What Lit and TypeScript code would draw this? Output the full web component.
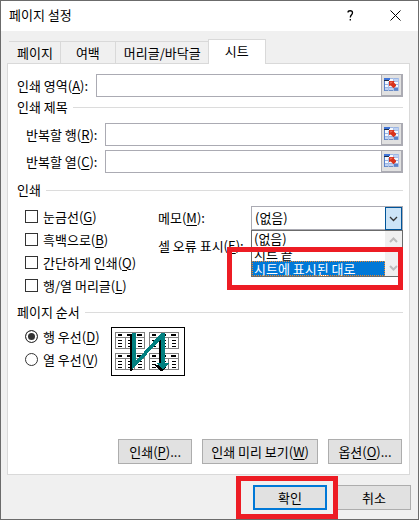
import { LitElement, html, css, svg } from "lit";
import { customElement, property, state } from "lit/decorators.js";
import { classMap } from "lit/directives/class-map.js";

const shared = css`
  :host {
    display: block;
    box-sizing: border-box;
  }
  *,
  *::before {
    box-sizing: border-box;
  }
  button,
  input,
  select {
    font: inherit;
    color: inherit;
    margin: 0;
    border-radius: 0;
  }
  u {
    text-decoration-thickness: 1px;
    text-underline-offset: 2px;
  }
`;

/** Caption followed by a thin rule. */
@customElement("section-heading")
export class SectionHeading extends LitElement {
  static styles = [
    shared,
    css`
      .heading {
        display: flex;
        align-items: center;
        gap: 5px;
        height: 20px;
        margin: 0;
        font-size: 13px;
        font-weight: 400;
      }
      .rule {
        flex: 1;
        height: 1px;
        background: #dcdcdc;
      }
    `,
  ];
  render() {
    return html`<h2 class="heading"><slot></slot><span class="rule"></span></h2>`;
  }
}

/** Labelled text box with a range picker button at its end. */
@customElement("range-field")
export class RangeField extends LitElement {
  @property() label = "";
  @property() key = "";

  static styles = [
    shared,
    css`
      .row {
        display: flex;
        align-items: center;
        height: 23px;
      }
      .label {
        flex: none;
        width: 79px;
        white-space: nowrap;
      }
      .box {
        flex: 1;
        display: flex;
        height: 23px;
        background: #fff;
        border: 1px solid #ababb3;
      }
      .input {
        flex: 1;
        min-width: 0;
        padding: 0 4px;
        border: 0;
        outline: 0;
        background: none;
      }
      .pick {
        display: flex;
        align-items: flex-start;
        justify-content: center;
        width: 21px;
        padding: 3px 0 0;
        background: #e1e1e1;
        border: solid #ababb3;
        border-width: 0 1px 1px;
      }
    `,
  ];

  render() {
    return html`
      <div class="row">
        <label class="label" for="range">${this.label}(<u>${this.key}</u>):</label>
        <div class="box">
          <input class="input" id="range" type="text" />
          <button class="pick" type="button" aria-label="범위 선택">
            <svg width="15" height="13" viewBox="0 0 15 13" shape-rendering="crispEdges">
              <rect width="15" height="13" fill="#f4f8fe" />
              <path fill="#3f74d8" d="M0 0h6v2H0z" />
              <path fill="#1d2d4a" d="M0 2h5v1H0z" />
              <path fill="#9bb5e2" d="M6 0h9v1H6zM0 6h15v1H0zM0 9h15v1H0z" />
              <path fill="#6e8fc8" d="M0 12h15v1H0z" />
              <path fill="#a9c0ea" d="M5 3h10v1H5zM4 4h1v9H4zM9 0h1v13H9zM14 0h1v13h-1z" />
              <path fill="#5a82cb" d="M0 3h1v10H0zM10 10h4v2h-4z" />
              <path fill="#bfd2f2" d="M1 10h3v2H1zM5 10h4v2H5zM10 1h4v2h-4z" />
              <path
                fill="#d8321c"
                shape-rendering="auto"
                d="M5 3h5.500L9.800 4.500 12 6.500V8L9.500 10.200 6.800 7.600 5 8z"
              />
              <path fill="#f0705a" shape-rendering="auto" d="M6 3.800h3L6.500 6z" />
            </svg>
          </button>
        </div>
      </div>
    `;
  }
}

/** Tick box or radio button with its caption. */
@customElement("check-option")
export class CheckOption extends LitElement {
  @property() kind: "checkbox" | "radio" = "checkbox";
  @property() label = "";
  @property() key = "";
  @property({ type: Boolean }) checked = false;

  static styles = [
    shared,
    css`
      .option {
        display: flex;
        align-items: center;
        gap: 5px;
        height: 23px;
        white-space: nowrap;
      }
      .mark {
        appearance: none;
        flex: none;
        width: 13px;
        height: 13px;
        background: #fff;
        border: 1px solid #333;
      }
      .mark.radio {
        border-radius: 50%;
      }
      .mark:checked {
        box-shadow: inset 0 0 0 2px #fff;
        background: #333;
      }
    `,
  ];

  private pick() {
    this.dispatchEvent(new CustomEvent("pick", { bubbles: true, composed: true }));
  }

  render() {
    return html`<label class="option">
      <input
        class=${classMap({ mark: true, radio: this.kind === "radio" })}
        type=${this.kind}
        .checked=${this.checked}
        @change=${this.pick}
      />
      <span>${this.label}(<u>${this.key}</u>)</span>
    </label>`;
  }
}

const sheet = (x: number, y: number) => svg`
  <g transform="translate(${x} ${y})">
    <path fill="#808080" d="M0 0h30v17H0z" />
    <path fill="#fff" d="M1 1h28v4H1zM1 6h9v10H1zM11 6h8v10h-8zM20 6h9v10h-9z" />
    <path fill="#000" d="M3 2h4v2H3zM12 2h5v2h-5zM22 2h5v2h-5z" />
    <path
      fill="#000"
      d="M3 8h4v1H3zM3 11h4v1H3zM3 14h4v1H3zM13 8h4v1h-4zM13 11h4v1h-4zM13 14h4v1h-4zM23 8h4v1h-4zM23 11h4v1h-4zM23 14h4v1h-4z"
    />
  </g>`;

@customElement("app-root")
export class AppRoot extends LitElement {
  @state() private order = "D";
  @state() private memo = 2;

  private memoItems = ["(없음)", "시트 끝", "시트에 표시된 대로"];
  private tabs = ["페이지", "여백", "머리글/바닥글", "시트"];
  private checks = [
    ["눈금선", "G"],
    ["흑백으로", "B"],
    ["간단하게 인쇄", "Q"],
    ["행/열 머리글", "L"],
  ];

  static styles = [
    shared,
    css`
      :host {
        font: 13px/18px "Noto Sans CJK KR", "Noto Sans", sans-serif;
        color: #000;
      }
      .dialog {
        display: flex;
        flex-direction: column;
        min-height: 100vh;
        background: #f0f0f0;
        border: 1px solid #6b6b6b;
      }
      .titlebar {
        display: flex;
        align-items: center;
        height: 30px;
        padding: 0 8px 2px;
        background: #fff;
      }
      .title {
        flex: 1;
        margin: 0;
        font-size: 13px;
        font-weight: 400;
      }
      .caption {
        display: flex;
        align-items: center;
        justify-content: center;
        width: 45px;
        height: 28px;
        padding: 0;
        border: 0;
        background: none;
      }
      .caption.close {
        width: 29px;
        margin-left: 8px;
      }
      .tabs {
        display: flex;
        align-items: flex-end;
        margin: 8px 8px 0;
      }
      .tab {
        height: 22px;
        padding: 0 7px 0 8px;
        background: none;
        border: solid #d9d9d9;
        border-width: 1px 1px 0 0;
        line-height: 20px;
      }
      .tab.mid {
        padding: 0 15px;
      }
      .tab.active {
        position: relative;
        height: 25px;
        margin-bottom: -1px;
        margin-left: -1px;
        padding: 0 16px 3px;
        background: #fff;
        border-width: 1px 1px 0;
      }
      .panel {
        flex: 1;
        display: flex;
        flex-direction: column;
        margin: 0 8px 0 6px;
        padding: 10px 6px 10px 9px;
        background: #fff;
        border: 1px solid #d9d9d9;
      }
      .titles {
        display: grid;
        gap: 4px;
        padding: 6px 0 7px 9px;
      }
      .settings {
        display: grid;
        grid-template-columns: 133px 1fr;
        padding: 5px 0 5px 8px;
      }
      .selects {
        padding-top: 1px;
      }
      .select-row {
        display: flex;
        align-items: center;
        height: 24px;
      }
      .select-row + .select-row {
        margin-top: 4px;
      }
      .select-label {
        flex: none;
        width: 93px;
        white-space: nowrap;
      }
      .combo {
        position: relative;
        flex: 1;
        display: flex;
        height: 24px;
      }
      .select {
        appearance: none;
        flex: 1;
        min-width: 0;
        padding: 0 20px 0 3px;
        background: #fff;
        border: 1px solid #ababb3;
        outline: 0;
      }
      .arrow {
        position: absolute;
        top: 1px;
        right: 1px;
        bottom: 0;
        display: flex;
        align-items: center;
        justify-content: center;
        width: 17px;
        background: #cce4f7;
        border: 1px solid #005499;
        pointer-events: none;
      }
      .popup {
        position: absolute;
        top: 24px;
        left: 0;
        right: 0;
        display: flex;
        background: #fff;
        border: 1px solid #6b6b6b;
      }
      .list {
        flex: 1;
        margin: 0;
        padding: 0;
        list-style: none;
      }
      .item {
        height: 15px;
        padding: 0 2px;
        line-height: 15px;
        white-space: nowrap;
      }
      .item.chosen {
        background: #0078d7;
        color: #fff;
        outline: 1px dotted #f08828;
        outline-offset: -1px;
      }
      .scroll {
        display: flex;
        flex-direction: column;
        align-items: center;
        justify-content: space-between;
        width: 17px;
        padding: 6px 0 5px;
        background: #f0f0f0;
      }
      .marker {
        position: absolute;
        border: 5px solid #ed1c24;
        pointer-events: none;
      }
      .marker.on-list {
        top: 41px;
        left: -24px;
        right: 0;
        height: 43px;
      }
      .marker.on-ok {
        inset: -9px -11px -9px -17px;
      }
      .order {
        display: flex;
        gap: 11px;
        padding: 3px 0 0 8px;
      }
      .preview {
        margin-top: 2px;
      }
      .actions {
        display: flex;
        justify-content: flex-end;
        gap: 10px;
        margin-top: auto;
        padding-right: 1px;
      }
      .footer {
        display: flex;
        justify-content: flex-end;
        gap: 10px;
        padding: 10px 7px 9px;
      }
      .button {
        min-width: 74px;
        height: 25px;
        padding: 0 8px;
        background: #e1e1e1;
        border: 1px solid #adadad;
        line-height: 20px;
        white-space: nowrap;
      }
      .button.default {
        border: 2px solid #0078d7;
      }
      .ok {
        position: relative;
        z-index: 1;
        display: flex;
      }
    `,
  ];

  private chevron(up: boolean, color: string, weight: number) {
    return html`<svg width="9" height="6" viewBox="0 0 9 6">
      <path
        d=${up ? "M1 5 4.500 1.500 8 5" : "M1 1 4.500 4.500 8 1"}
        fill="none"
        stroke=${color}
        stroke-width=${weight}
      />
    </svg>`;
  }

  render() {
    return html`
      <form class="dialog" @submit=${(e: Event) => e.preventDefault()}>
        <header class="titlebar">
          <h1 class="title">페이지 설정</h1>
          <button class="caption" type="button" aria-label="도움말">
            <svg width="7" height="11" viewBox="0 0 7 11">
              <path
                d="M1 2.500C1 .2 5.500 0 5.500 2.700 5.500 4.700 3.300 4.800 3.300 7.500M3.300 9v1.500"
                fill="none"
                stroke="#000"
                stroke-width="1.300"
              />
            </svg>
          </button>
          <button class="caption close" type="button" aria-label="닫기">
            <svg width="11" height="11" viewBox="0 0 11 11">
              <path d="M.5.5l10 10M10.500.5l-10 10" fill="none" stroke="#000" stroke-width="1" />
            </svg>
          </button>
        </header>

        <nav class="tabs" role="tablist">
          ${this.tabs.map(
            (t, i) => html`<button
              type="button"
              role="tab"
              aria-selected=${i === 3}
              class=${classMap({ tab: true, mid: i === 1, active: i === 3 })}
            >
              ${t}
            </button>`
          )}
        </nav>

        <main class="panel">
          <range-field label="인쇄 영역" key="A"></range-field>
          <section-heading>인쇄 제목</section-heading>
          <div class="titles">
            <range-field label="반복할 행" key="R"></range-field>
            <range-field label="반복할 열" key="C"></range-field>
          </div>

          <section-heading>인쇄</section-heading>
          <div class="settings">
            <div>
              ${this.checks.map(
                ([label, key]) => html`<check-option label=${label} key=${key}></check-option>`
              )}
            </div>
            <div class="selects">
              <div class="select-row">
                <label class="select-label" for="memo">메모(<u>M</u>):</label>
                <div class="combo">
                  <select class="select" id="memo">
                    ${this.memoItems.map((m) => html`<option>${m}</option>`)}
                  </select>
                  <span class="arrow">${this.chevron(false, "#333", 1.3)}</span>
                  <div class="popup">
                    <ul class="list" role="listbox" aria-label="메모">
                      ${this.memoItems.map(
                        (m, i) => html`<li
                          role="option"
                          aria-selected=${i === this.memo}
                          class=${classMap({ item: true, chosen: i === this.memo })}
                          @click=${() => (this.memo = i)}
                        >
                          ${m}
                        </li>`
                      )}
                    </ul>
                    <div class="scroll">
                      ${this.chevron(true, "#bcbcbc", 2)}${this.chevron(false, "#bcbcbc", 2)}
                    </div>
                  </div>
                  <span class="marker on-list"></span>
                </div>
              </div>
              <div class="select-row">
                <span class="select-label">셀 오류 표시(<u>E</u>):</span>
              </div>
            </div>
          </div>

          <section-heading>페이지 순서</section-heading>
          <div class="order">
            <div>
              <check-option
                kind="radio"
                label="행 우선"
                key="D"
                .checked=${this.order === "D"}
                @pick=${() => (this.order = "D")}
              ></check-option>
              <check-option
                kind="radio"
                label="열 우선"
                key="V"
                .checked=${this.order === "V"}
                @pick=${() => (this.order = "V")}
              ></check-option>
            </div>
            <svg class="preview" width="74" height="49" viewBox="0 0 74 49" shape-rendering="crispEdges">
              <rect width="74" height="49" fill="#000" />
              <rect x="1" y="1" width="72" height="47" fill="#fff" />
              ${sheet(4, 5)}${sheet(38, 5)}${sheet(4, 26)}${sheet(38, 26)}
              <path fill="#000" d="M19 8h3v34l-2 2h-1zM48 14l2-3v28l4 2-3 3h-2l-6-6h5z" />
              <path fill="#008080" d="M21 6h4v28L50 6h4v30h4l-5 6h-2l-5-6h4V12L23 41l-2 1z" />
            </svg>
          </div>

          <div class="actions">
            <button class="button" type="button">인쇄(<u>P</u>)...</button>
            <button class="button" type="button">인쇄 미리 보기(<u>W</u>)</button>
            <button class="button" type="button">옵션(<u>O</u>)...</button>
          </div>
        </main>

        <footer class="footer">
          <div class="ok">
            <button class="button default" type="submit">확인</button>
            <span class="marker on-ok"></span>
          </div>
          <button class="button" type="button">취소</button>
        </footer>
      </form>
    `;
  }
}
